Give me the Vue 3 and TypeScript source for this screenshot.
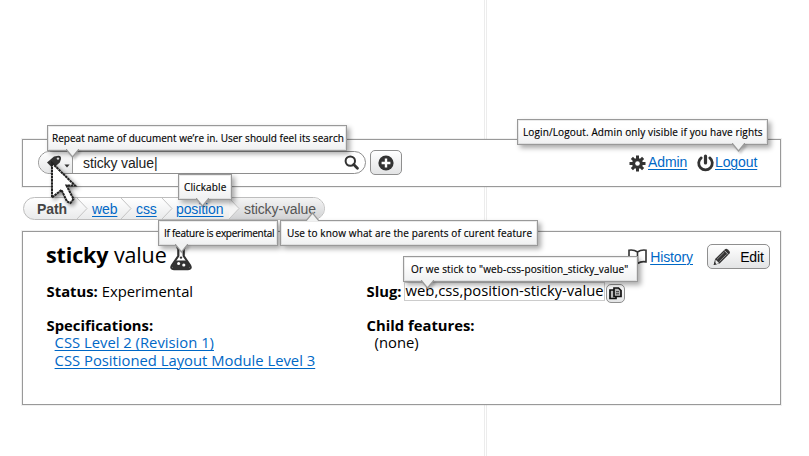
<script setup lang="ts">
interface Note {
  id: string
  text: string
  up?: boolean
}

const notes: Note[] = [
  { id: 'search', text: 'Repeat name of ducument we’re in. User should feel its search' },
  { id: 'session', text: 'Login/Logout. Admin only visible if you have rights' },
  { id: 'crumb', text: 'Clickable' },
  { id: 'flask', text: 'If feature is experimental' },
  { id: 'parents', text: 'Use to know what are the parents of curent feature', up: true },
  { id: 'slug', text: 'Or we stick to "web-css-position_sticky_value"' },
]

const crumbs: string[] = ['web', 'css', 'position']
</script>

<template>
  <div class="page">
    <div class="guide"></div>

    <header class="bar">
      <div class="search">
        <div class="scope">
          <svg class="tag" width="16" height="14" viewBox="0 0 16 14">
            <path d="M1 7.5 8 1.4 12.5.8Q15.2.8 15 4L13.8 7.5 7 13.5Z" fill="#333" />
            <circle cx="12" cy="3.6" r="1.2" fill="#ddd" />
          </svg>
          <svg class="caret" width="6" height="4" viewBox="0 0 6 4"><path d="M.4.4h5.2L3 3.6Z" fill="#333" /></svg>
        </div>
        <span class="query">sticky value|</span>
        <svg class="lens" width="15" height="15" viewBox="0 0 15 15" fill="none" stroke="#333">
          <circle cx="6.3" cy="6.1" r="4.7" stroke-width="2" />
          <path d="m9.7 9.6 3.7 3.6" stroke-width="2.8" stroke-linecap="round" />
        </svg>
      </div>
      <button class="btn add">
        <svg width="16" height="16" viewBox="0 0 16 16">
          <circle cx="8" cy="8" r="7.6" fill="#333" />
          <path d="M8 3.6v8.8M3.6 8h8.8" stroke="#fff" stroke-width="2.4" />
        </svg>
      </button>
      <nav class="account">
        <svg width="17" height="17" viewBox="-8.5 -8.5 17 17">
          <path d="M0-8V8M-8 0H8M-5.6-5.6 5.6 5.6M-5.6 5.6 5.6-5.6" stroke="#333" stroke-width="3" />
          <circle r="5.4" fill="#333" />
          <circle r="2.3" fill="#fff" />
        </svg>
        <a class="admin">Admin</a>
        <svg width="17" height="18" viewBox="0 0 17 18" fill="none" stroke="#333" stroke-linecap="round">
          <path d="M4.2 3.9A6.8 6.8 0 1 0 12.8 3.9" stroke-width="2.8" />
          <path d="M8.5 2v7" stroke-width="3.2" />
        </svg>
        <a class="logout">Logout</a>
      </nav>
    </header>

    <nav class="path">
      <span class="label">Path</span>
      <template v-for="c in crumbs" :key="c">
        <svg class="sep" width="11" height="21" viewBox="0 0 11 21"><path d="M0 0 10 10.5 0 21" fill="none" stroke="#c4c4c4" /></svg>
        <a :class="c">{{ c }}</a>
      </template>
      <span class="current">
        <svg class="sep" width="11" height="21" viewBox="0 0 11 21"><path d="M0 0 10 10.5 0 21Z" fill="#f4f4f4" /><path d="M0 0 10 10.5 0 21" fill="none" stroke="#c4c4c4" /></svg>
        <span class="leaf">sticky-value</span>
      </span>
    </nav>

    <main class="panel">
      <div class="heading">
        <h1><b>sticky</b> <span>value</span></h1>
        <svg class="beaker" width="22" height="25" viewBox="0 0 22 25">
          <path d="M6.5 1.5h9M8.3 2v8L2 19.2Q0 23 4 23.2h14Q22 23 20 19.2L13.7 10V2" fill="#fff" stroke="#333" stroke-width="2.2" />
          <path d="M5.7 14.5h10.6l4 5.8-2.3 3H4l-2.3-3Z" fill="#333" />
          <circle cx="8.6" cy="17.6" r="1.5" fill="#fff" /><circle cx="13.8" cy="19" r="1.6" fill="#fff" />
          <circle cx="11" cy="11.6" r="1.2" fill="#333" />
        </svg>
        <div class="actions">
          <svg class="book" width="19" height="16" viewBox="0 0 19 16" fill="#fff" stroke="#333" stroke-width="1.6">
            <path d="M9.5 3Q6 .5 1 1.2v11.7Q6 12 9.5 14.7 13 12 18 12.9V1.2Q13 .5 9.5 3ZM9.5 3v11.7" />
          </svg>
          <a class="history">History</a>
          <button class="btn edit">
            <svg width="18" height="18" viewBox="0 0 18 18">
              <path d="m.7 17 1.4-6L12 1.2q1.3-1 2.8.3l1.5 1.6q1.2 1.3.1 2.6L6.6 15.5Z" fill="#333" />
              <path d="m2.5 11.4 3.8 3.8-3.9 1Z" fill="#eee" />
              <path d="m.7 17 .7-3 2.2 2.2Z" fill="#333" />
              <path d="m4 11.3 7.2-7.1M6.4 13.5l7.2-7.1" stroke="#999" stroke-width=".9" />
              <path d="m11.5 2.6 3.8 4" stroke="#ddd" stroke-width=".8" />
            </svg>
            <span>Edit</span>
          </button>
        </div>
      </div>

      <div class="columns">
        <section class="left">
          <p class="status"><b>Status:</b> Experimental</p>
          <h2>Specifications:</h2>
          <ul>
            <li><a>CSS Level 2 (Revision 1)</a></li>
            <li><a>CSS Positioned Layout Module Level 3</a></li>
          </ul>
        </section>
        <section class="right">
          <p class="slugline">
            <b>Slug:</b>
            <span class="value">web,css,position-sticky-value</span>
            <button class="btn copy">
              <svg width="13" height="13" viewBox="0 0 13 13" fill="#bbb" stroke="#111" stroke-width="1.7">
                <path d="M1 3h6v8.5H1Z" /><path d="M5 1h4.5L12 3.5V9.5H5Z" /><path d="M7 4.7h3M7 6.8h3" stroke-width=".8" />
              </svg>
            </button>
          </p>
          <h2>Child features:</h2>
          <ul><li>(none)</li></ul>
        </section>
      </div>
    </main>

    <div v-for="n in notes" :key="n.id" class="note" :class="['on-' + n.id, { up: n.up }]">
      <span>{{ n.text }}</span>
      <svg class="arrow" width="13" height="9" viewBox="0 0 13 9">
        <path d="M0 0 6.5 8 13 0" fill="#f1f2f2" stroke="#999" stroke-width="1.2" />
      </svg>
    </div>

    <svg class="cursor" width="28" height="45" viewBox="0 0 28 45">
      <path d="M2 2 25 24.5H16.5L23.5 38 20.5 42 17 40.5 11.5 29 2 36.5Z" fill="#fff" stroke="#222" stroke-width="2" stroke-dasharray="2.6 .5" />
    </svg>
  </div>
</template>

<style>
body { margin: 0; background: #fff; }
</style>

<style scoped>
* { box-sizing: border-box; }
svg { display: block; flex: none; }
.page {
  position: relative; width: 809px; height: 456px; overflow: hidden;
  padding: 139px 28px 0 22px; background: #fff; color: #000;
  font-family: "Open Sans", "Noto Sans", sans-serif; font-size: 14.8px;
}
a { color: #0068c6; text-decoration: underline; text-decoration-thickness: 1px; text-underline-offset: 2px; white-space: nowrap; }
h1, h2, p, ul { margin: 0; padding: 0; list-style: none; }
.guide { position: absolute; left: 484px; top: 0; width: 3px; height: 456px; border: solid #ececec; border-width: 0 1px; }
.bar, .search, .scope, .account, .path, .current, .heading, .actions, .slugline, .btn { display: flex; align-items: center; }
.bar, .panel { position: relative; width: 759px; background: #fff; border: 1px solid #999; box-shadow: 0 0 0 1px #99999926; }
.bar { height: 48px; padding-left: 15px; font: 14px "Liberation Sans", sans-serif; }
.search { width: 328px; height: 23px; margin-top: -1px; border: 1px solid #8e8e8e; border-radius: 12px; overflow: hidden; }
.scope { width: 34px; height: 100%; padding-left: 7px; gap: 2px; border-right: 1px solid #999; background: linear-gradient(#fff, #e5e6e7); }
.tag { margin-top: -2px; }
.caret { margin-top: 7px; }
.query { margin-left: 10px; flex: 1; color: #222; letter-spacing: -.12px; }
.lens { margin-right: 6px; }
.btn { justify-content: center; padding: 0; margin: 0; border: 1px solid #8f8f8f; border-radius: 5px; background: linear-gradient(#fff, #e3e4e5); color: #000; }
.add { width: 32px; height: 25px; margin: -1px 0 0 4px; }
.account { margin-left: 227px; letter-spacing: -.1px; }
.admin { width: 39px; margin: -2px 10px 0 2px; }
.logout { margin: -2px 0 0 1px; }
.path {
  width: 302px; height: 23px; margin: 10px 0 11px 1px; border: 1px solid #bdbdbd; border-radius: 12px; overflow: hidden;
  background: linear-gradient(#fff, #e9eaeb); font: 14px/20px "Liberation Sans", sans-serif; letter-spacing: -.1px; white-space: nowrap;
}
.label { width: 53px; padding-left: 13px; font-weight: bold; color: #444; }
.path .web { width: 29px; margin-left: 4px; }
.path .css { width: 26px; margin-left: 4px; }
.path .position { width: 53px; margin-left: 3px; }
.current { flex: 1; height: 100%; background: linear-gradient(#f4f4f4, #d2d3d5); color: #555; }
.leaf { margin-left: 4px; }
.panel { height: 174px; padding: 6px 10px 0 23px; }
.heading { height: 34px; }
h1 { width: 122px; font-size: 21.5px; letter-spacing: -.13px; font-weight: 400; line-height: 30px; white-space: nowrap; }
.beaker { margin: 7px 0 0 2px; }
.actions { margin: 3px 0 0 auto; font: 14px "Liberation Sans", sans-serif; }
.history { margin-left: 3px; letter-spacing: -.1px; }
.edit { width: 63px; height: 25px; margin-left: 14px; gap: 9px; font: 14px "Liberation Sans", sans-serif; letter-spacing: -.1px; }
.columns { display: flex; padding: 10px 0 0 .6px; line-height: 18px; white-space: nowrap; }
.left { width: 320px; }
p { height: 18px; }
h2 { font-size: 14.8px; line-height: 18px; margin-top: 16px; }
b, h2 { font-weight: 700; }
ul { padding-left: 8px; line-height: 17.5px; }
.value { width: 201px; height: 19px; margin: 1px 0 0 2px; padding-left: 1px; border: 1px solid #ccc; line-height: 15px; }
.copy { width: 19px; height: 19px; margin: 4px 0 0 1px; }
.note {
  position: absolute; height: 26px; padding-left: 5px; border: 1px solid #999; outline: 1px solid #9993; outline-offset: -2px;
  background: linear-gradient(#fff 30%, #eff0f1); box-shadow: 3px 3px 5px #0005;
  font-size: 10px; line-height: 24px; letter-spacing: .13px; white-space: nowrap; -webkit-text-stroke: .15px #000;
}
.arrow { position: absolute; top: 23px; filter: drop-shadow(2px 2px 1px #0003); }
.on-search { left: 47px; top: 125px; width: 300px; padding-left: 4px; line-height: 25px; letter-spacing: .02px; }
.on-search .arrow { left: 18px; }
.on-session { left: 517px; top: 119px; width: 251px; }
.on-session .arrow { left: 214px; }
.on-crumb { left: 178px; top: 174px; width: 54px; line-height: 25px; }
.on-crumb .arrow { left: 17px; }
.on-flask { left: 158px; top: 220px; width: 120px; line-height: 25px; letter-spacing: -.26px; }
.on-flask .arrow { left: 16px; }
.on-parents { left: 280px; top: 220px; width: 258px; padding-left: 6px; line-height: 25px; }
.up .arrow { top: -9px; left: 25px; transform: rotate(180deg); filter: none; }
.on-slug { left: 403px; top: 256px; width: 235px; padding-left: 7px; }
.on-slug .arrow { left: 17px; }
.cursor { position: absolute; left: 50px; top: 161px; filter: drop-shadow(2px 2px 2px #0007); }
</style>
